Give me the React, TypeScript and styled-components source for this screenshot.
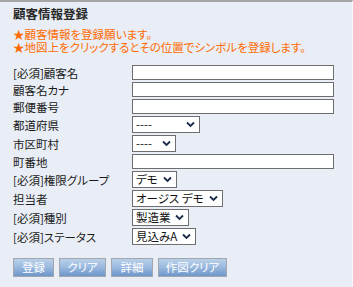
import React from "react";
import styled, { createGlobalStyle } from "styled-components";

const Global = createGlobalStyle`
  html, body { margin: 0; padding: 0; }
  body { font-family: "Noto Sans CJK JP", "Noto Sans", sans-serif; }
`;

const Panel = styled.div`
  box-sizing: border-box;
  width: 353px;
  height: 287px;
  background: #e9eef6;
  border-top: 2px solid #a6a6a6;
  border-right: 1px solid #f7f9fc;
  padding: 4px 13px 0 13px;
  font-family: "Noto Sans CJK JP", sans-serif;
  font-feature-settings: "palt";
  display: flex;
  flex-direction: column;
`;

const Title = styled.h1`
  margin: 0;
  font-size: 12.5px;
  line-height: 16px;
  font-weight: 700;
  color: #2a2a2a;
`;

const Notes = styled.div`
  margin-top: 6px;
  display: flex;
  flex-direction: column;
`;

const Note = styled.div`
  color: #ff6a00;
  font-size: 11.5px;
  line-height: 13px;
`;

const Form = styled.div`
  margin-top: 11px;
  display: grid;
  grid-template-columns: 119px 1fr;
  row-gap: 2px;
  align-items: center;
`;

const Label = styled.div`
  font-size: 11.5px;
  line-height: 14px;
  color: #1a1a1a;
  white-space: nowrap;
`;

const TextInput = styled.input`
  box-sizing: border-box;
  width: 202px;
  height: 15px;
  border: 1px solid #6e6e6e;
  background: #fff;
  margin: 0;
  padding: 0 2px;
  outline: none;
`;

const SelectBox = styled.div<{ $w: number }>`
  position: relative;
  box-sizing: border-box;
  width: ${(p) => p.$w}px;
  height: 17px;
  border: 1px solid #6e6e6e;
  background: #fff;
  display: flex;
  align-items: center;
  padding-left: 3px;
  cursor: default;
`;

const SelectValue = styled.span`
  font-size: 11.5px;
  line-height: 15px;
  color: #111;
  white-space: pre;
`;

const Chevron = styled.svg`
  position: absolute;
  right: 4px;
  top: 4px;
  width: 9px;
  height: 7px;
  pointer-events: none;
`;

const Buttons = styled.div`
  margin-top: 13px;
  display: flex;
  gap: 5px;
`;

const Button = styled.button<{ $w: number }>`
  box-sizing: border-box;
  width: ${(p) => p.$w}px;
  height: 19px;
  border: 1px solid #a3a7ad;
  background: linear-gradient(#b9d0e8, #9dbbe0 45%, #6d97c9);
  color: #fff;
  font-family: "Noto Sans CJK JP", sans-serif;
  font-feature-settings: "palt";
  font-size: 11.5px;
  line-height: 17px;
  padding: 0;
  cursor: pointer;
`;

function Select({ w, value }: { w: number; value: string }) {
  return (
    <SelectBox $w={w} role="combobox" aria-expanded={false}>
      <SelectValue>{value}</SelectValue>
      <Chevron viewBox="0 0 9 7">
        <path d="M1 1.5 L4.5 5 L8 1.5" fill="none" stroke="#1b2a4a" strokeWidth="1.8" />
      </Chevron>
    </SelectBox>
  );
}

export default function App() {
  return (
    <>
      <Global />
      <Panel>
        <Title>顧客情報登録</Title>
        <Notes>
          <Note>★顧客情報を登録願います。</Note>
          <Note>★地図上をクリックするとその位置でシンボルを登録します。</Note>
        </Notes>
        <Form>
          <Label>[必須]顧客名</Label>
          <TextInput />
          <Label>顧客名カナ</Label>
          <TextInput />
          <Label>郵便番号</Label>
          <TextInput />
          <Label>都道府県</Label>
          <Select w={68} value="----" />
          <Label>市区町村</Label>
          <Select w={44} value="----" />
          <Label>町番地</Label>
          <TextInput />
          <Label>[必須]権限グループ</Label>
          <Select w={45} value="デモ" />
          <Label>担当者</Label>
          <Select w={91} value="オージス デモ" />
          <Label>[必須]種別</Label>
          <Select w={57} value="製造業" />
          <Label>[必須]ステータス</Label>
          <Select w={64} value="見込みA" />
        </Form>
        <Buttons>
          <Button $w={41}>登録</Button>
          <Button $w={47}>クリア</Button>
          <Button $w={42}>詳細</Button>
          <Button $w={69}>作図クリア</Button>
        </Buttons>
      </Panel>
    </>
  );
}
